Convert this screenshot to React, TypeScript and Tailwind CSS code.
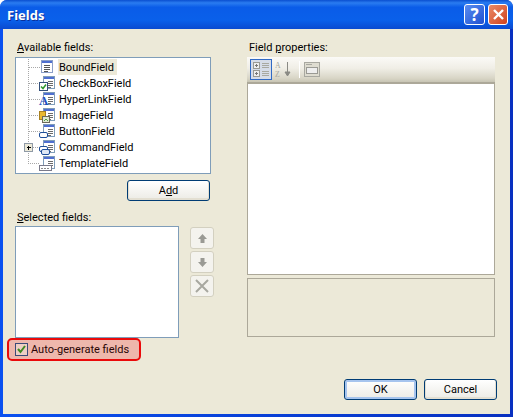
const uiFont = "font-['Roboto','Noto_Sans',sans-serif] text-[11px] leading-[16px] text-black";

function DocBase({ x, y }: { x: number; y: number }) {
  return (
    <g transform={`translate(${x} ${y})`} shapeRendering="crispEdges">
      <rect x="0.5" y="0.5" width="11" height="12" fill="#fff" stroke="#7f9db9" />
      <rect x="1" y="1" width="10" height="2" fill="#4f6fd0" />
      <path d="M5 5.5h5M5 7.5h5M5 9.5h5M5 11.5h3" stroke="#6b6b6b" />
    </g>
  );
}

function TreeLines({ last, plus }: { last?: boolean; plus?: boolean }) {
  return (
    <g shapeRendering="crispEdges">
      <path
        d={last ? "M12.5 0V8.5H24" : "M12.5 0V16M12.5 8.5H24"}
        stroke="#a8a8a8"
        strokeDasharray="1 1"
        fill="none"
      />
      {plus && (
        <g>
          <rect x="8.5" y="4.5" width="8" height="8" fill="#ece9d8" stroke="#8f9aa6" />
          <path d="M10.5 8.5h4M12.5 6.5v4" stroke="#000" />
        </g>
      )}
    </g>
  );
}

function FieldIcon({ kind }: { kind: string }) {
  const last = kind === "template";
  return (
    <svg width="40" height="16" viewBox="0 0 40 16" className="shrink-0">
      <TreeLines last={last} plus={kind === "command"} />
      {kind === "bound" && (
        <g shapeRendering="crispEdges">
          <rect x="25.5" y="1.5" width="11" height="12" fill="#fff" stroke="#8ca0c8" />
          <rect x="26" y="2" width="10" height="2" fill="#4f6fd0" />
          <path d="M28 6.5h6M28 8.5h6M28 10.5h6M28 12.5h4" stroke="#555" />
        </g>
      )}
      {kind !== "bound" && <DocBase x={27} y={1} />}
      {kind === "check" && (
        <g>
          <rect x="23.5" y="7.5" width="8" height="8" fill="#fff" stroke="#34507a" shapeRendering="crispEdges" />
          <path d="M25 11.5l2 2 3-4" stroke="#2f9a2f" strokeWidth="1.5" fill="none" />
        </g>
      )}
      {kind === "link" && (
        <text x="23" y="14" fontFamily="Liberation Serif, serif" fontWeight="700" fontSize="13" fill="#1f4fc0">
          A
        </text>
      )}
      {kind === "image" && (
        <g shapeRendering="crispEdges">
          <rect x="23.5" y="4.5" width="6" height="8" fill="#e8b830" stroke="#a88020" />
          <rect x="26.5" y="9.5" width="7" height="6" fill="#dfe8d0" stroke="#6a6a5a" />
          <path d="M28 14l2-2 2 2" stroke="#4f9a3f" fill="none" />
        </g>
      )}
      {kind === "button" && (
        <rect x="23.5" y="9.5" width="8" height="5" rx="1.5" fill="#fff" stroke="#1f4f9a" />
      )}
      {kind === "command" && (
        <g>
          <rect x="23.5" y="7.5" width="8" height="5" rx="1.5" fill="#fff" stroke="#1f4f9a" />
          <rect x="25.5" y="10.5" width="8" height="5" rx="1.5" fill="#dfe8f5" stroke="#1f4f9a" />
        </g>
      )}
      {kind === "template" && (
        <g shapeRendering="crispEdges">
          <rect x="23.5" y="10.5" width="12" height="5" fill="#fff" stroke="#7a7a8a" />
          <path d="M25 13.5h9" stroke="#8a8a8a" strokeDasharray="2 1" />
        </g>
      )}
    </svg>
  );
}

const fields = [
  { name: "BoundField", kind: "bound" },
  { name: "CheckBoxField", kind: "check" },
  { name: "HyperLinkField", kind: "link" },
  { name: "ImageField", kind: "image" },
  { name: "ButtonField", kind: "button" },
  { name: "CommandField", kind: "command" },
  { name: "TemplateField", kind: "template" },
];

function XpButton({ label, primary, className }: { label: React.ReactNode; primary?: boolean; className: string }) {
  return (
    <button
      className={`h-[21px] rounded-[3px] border border-[#003c74] bg-gradient-to-b from-white to-[#ecebe5] text-center ${
        primary ? "shadow-[inset_0_0_0_2px_#a6c4ee]" : "shadow-[inset_0_-1px_0_1px_#e3dfd2]"
      } ${className}`}
    >
      {label}
    </button>
  );
}

function SideButton({ children }: { children: React.ReactNode }) {
  return (
    <div className="flex h-[22px] w-[24px] items-center justify-center rounded-[3px] border border-[#d3d0c0] bg-[#f4f3ee]">
      {children}
    </div>
  );
}

export default function App() {
  return (
    <div className={`flex h-[417px] w-[513px] flex-col overflow-hidden rounded-t-[7px] bg-gradient-to-r from-[#0a50f0] to-[#0830c0] ${uiFont}`}>
      {/* Title bar */}
      <div className="flex h-[29px] shrink-0 items-center bg-[linear-gradient(#0a4fd0,#2a7cf0_10%,#0a5ce8_25%,#0a60ea_70%,#0a4ad0)] pl-[7px] pr-[5px]">
        <span className="flex-1 font-['Noto_Sans',sans-serif] text-[13px] font-bold text-white [text-shadow:1px_1px_0_#0a2f9a]">
          Fields
        </span>
        <div className="flex h-[21px] w-[21px] items-center justify-center rounded-[3px] border border-white bg-gradient-to-br from-[#5a8cf0] to-[#1f4fd0] font-['Noto_Sans',sans-serif] text-[17px] font-bold text-white">
          ?
        </div>
        <div className="ml-[3px] flex h-[21px] w-[20px] items-center justify-center rounded-[3px] border border-white bg-gradient-to-br from-[#ea8a66] to-[#d0401a]">
          <svg width="13" height="13" viewBox="0 0 13 13">
            <path d="M2 2l9 9M11 2l-9 9" stroke="#fff" strokeWidth="2.4" />
          </svg>
        </div>
      </div>

      {/* Client area */}
      <div className="mx-[3px] mb-[3px] flex min-h-0 flex-1 flex-col bg-[#ece9d8] pt-[10px]">
        <div className="flex">
          {/* Left column */}
          <div className="ml-[12px] flex w-[232px] flex-col">
            <div className="ml-[2px] h-[18px] pt-[1px]">
              <u>A</u>vailable fields:
            </div>
            <div className="h-[117px] w-[196px] border border-[#7f9db9] bg-white pt-[1px]">
              {fields.map((f, i) => (
                <div key={f.name} className="flex h-[16px] items-center">
                  <FieldIcon kind={f.kind} />
                  <span
                    className={`ml-[2px] h-[16px] pl-[1px] pt-[1px] ${i === 0 ? "w-[59px] bg-[#ece9d8]" : ""}`}
                  >
                    {f.name}
                  </span>
                </div>
              ))}
            </div>
            <XpButton
              className="ml-[112px] mt-[6px] w-[83px]"
              label={
                <>
                  A<u>d</u>d
                </>
              }
            />
            <div className="ml-[2px] mt-[8px] h-[17px] pt-[1px]">
              <u>S</u>elected fields:
            </div>
            <div className="flex">
              <div className="h-[112px] w-[164px] border border-[#7f9db9] bg-white" />
              <div className="ml-[11px] mt-[1px] flex flex-col gap-[2px]">
                <SideButton>
                  <svg width="11" height="11" viewBox="0 0 11 11">
                    <path d="M5.5 1L10 6H7.5V10H3.5V6H1z" fill="#9a9a94" />
                  </svg>
                </SideButton>
                <SideButton>
                  <svg width="11" height="11" viewBox="0 0 11 11">
                    <path d="M5.5 10L10 5H7.5V1H3.5V5H1z" fill="#9a9a94" />
                  </svg>
                </SideButton>
                <SideButton>
                  <svg width="14" height="14" viewBox="0 0 14 14">
                    <path d="M1 1l12 12M13 1L1 13" stroke="#a8a8a0" strokeWidth="2" />
                  </svg>
                </SideButton>
              </div>
            </div>
            <div className="-ml-[8px] flex h-[23px] w-[134px] items-center rounded-[5px] border-2 border-[#ea0a0a] bg-[#eeb7ac] pl-[6px]">
              <div className="flex h-[13px] w-[13px] items-center justify-center border border-[#3c4a78] bg-[#eecfc4]">
                <svg width="11" height="11" viewBox="0 0 11 11">
                  <path d="M2 5l2.5 3L9 2" stroke="#3f8a22" strokeWidth="2" fill="none" />
                </svg>
              </div>
              <span className="ml-[3px] text-[#2a0505]">
                Auto-<u>g</u>enerate fields
              </span>
            </div>
          </div>

          {/* Right column */}
          <div className="flex w-[248px] flex-col">
            <div className="ml-[2px] h-[18px] pt-[1px]">
              Field <u>p</u>roperties:
            </div>
            <div className="flex h-[25px] items-center bg-[linear-gradient(#fbfaf7,#f0eee6_45%,#d8d5c6_85%,#c8c5b4)] pl-[3px]">
              <div className="flex h-[21px] w-[22px] items-center justify-center border border-[#316ac5] bg-[#d6dce8]">
                <svg width="17" height="15" viewBox="0 0 17 15" shapeRendering="crispEdges">
                  <rect x="0.5" y="0.5" width="6" height="6" fill="#eee" stroke="#9a9a94" />
                  <rect x="0.5" y="8.5" width="6" height="6" fill="#eee" stroke="#9a9a94" />
                  <path d="M2 3.5h3M3.5 2v3M2 11.5h3M3.5 10v3" stroke="#777" />
                  <path d="M9 1.5h7M9 3.5h7M9 5.5h7M9 9.5h7M9 11.5h7M9 13.5h7" stroke="#a8a8a0" />
                </svg>
              </div>
              <svg className="ml-[3px]" width="17" height="19" viewBox="0 0 17 19">
                <text x="0" y="8" fontFamily="Liberation Serif, serif" fontSize="7.8" fill="#a8a8a0">
                  A
                </text>
                <text x="0" y="17" fontFamily="Liberation Serif, serif" fontSize="7.8" fill="#a8a8a0">
                  Z
                </text>
                <path d="M12.5 2v12M10 12l2.5 4 2.5-4z" stroke="#8a8a84" fill="#8a8a84" />
              </svg>
              <div className="ml-[7px] h-[17px] w-[1px] bg-white" />
              <svg className="ml-[4px]" width="16" height="15" viewBox="0 0 16 15" shapeRendering="crispEdges">
                <rect x="0.5" y="0.5" width="15" height="14" fill="#dedcd0" stroke="#a8a8a0" />
                <rect x="2.5" y="5.5" width="11" height="6" rx="1" fill="#eee" stroke="#9a9a94" />
                <path d="M2 2.5h6" stroke="#a8a8a0" />
              </svg>
            </div>
            <div className="h-[193px] border border-t-2 border-[#aca899] bg-white" />
            <div className="mt-[3px] h-[59px] border border-[#aca899]" />
            <div className="mt-[42px] -mr-[2px] flex justify-end gap-[7px]">
              <XpButton primary className="w-[73px]" label="OK" />
              <XpButton className="w-[73px]" label="Cancel" />
            </div>
          </div>
        </div>
      </div>
    </div>
  );
}
